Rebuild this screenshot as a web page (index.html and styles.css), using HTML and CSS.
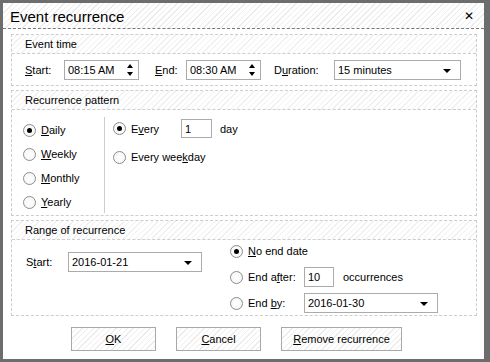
FILE: index.html
```html
<!DOCTYPE html>
<html>
<head>
    <link rel="stylesheet" href="styles.css">
</head>
<body>
    <div class="dialog">
        <div class="titlebar">
            <span class="title">Event recurrence</span>
            <span class="close">&#x2715;</span>
        </div>

        <div class="group group-time">
            <div class="group-header">Event time</div>
            <div class="time-row">
                <span class="lbl lbl-start"><u>S</u>tart:</span>
                <div class="field spin spin-start">08:15 AM<span class="spinner"><i class="up"></i><i class="down"></i></span></div>
                <span class="lbl lbl-end"><u>E</u>nd:</span>
                <div class="field spin spin-end">08:30 AM<span class="spinner"><i class="up"></i><i class="down"></i></span></div>
                <span class="lbl lbl-dur">D<u>u</u>ration:</span>
                <div class="field combo combo-dur">15 minutes<i class="arrow"></i></div>
            </div>
        </div>

        <div class="group group-pattern">
            <div class="group-header">Recurrence pattern</div>
            <div class="pattern-body">
                <div class="freq-list">
                    <label class="radio"><span class="dot checked"></span><span><u>D</u>aily</span></label>
                    <label class="radio"><span class="dot"></span><span><u>W</u>eekly</span></label>
                    <label class="radio"><span class="dot"></span><span><u>M</u>onthly</span></label>
                    <label class="radio"><span class="dot"></span><span><u>Y</u>early</span></label>
                </div>
                <div class="freq-detail">
                    <div class="every-row">
                        <label class="radio"><span class="dot checked"></span><span>E<u>v</u>ery</span></label>
                        <div class="field num num-days">1</div>
                        <span>day</span>
                    </div>
                    <label class="radio weekday"><span class="dot"></span><span>Every wee<u>k</u>day</span></label>
                </div>
            </div>
        </div>

        <div class="group group-range">
            <div class="group-header">Range of recurrence</div>
            <div class="range-body">
                <div class="range-start">
                    <span class="lbl">S<u>t</u>art:</span>
                    <div class="field combo combo-start">2016-01-21<i class="arrow"></i></div>
                </div>
                <div class="range-end">
                    <div class="end-row">
                        <label class="radio"><span class="dot checked"></span><span><u>N</u>o end date</span></label>
                    </div>
                    <div class="end-row">
                        <label class="radio end-lbl"><span class="dot"></span><span>End a<u>f</u>ter:</span></label>
                        <div class="field num num-occ">10</div>
                        <span class="occ">occurrences</span>
                    </div>
                    <div class="end-row">
                        <label class="radio end-lbl"><span class="dot"></span><span>End <u>b</u>y:</span></label>
                        <div class="field combo combo-end">2016-01-30<i class="arrow"></i></div>
                    </div>
                </div>
            </div>
        </div>

        <div class="buttons">
            <button class="btn btn-ok"><u>O</u>K</button>
            <button class="btn btn-cancel"><u>C</u>ancel</button>
            <button class="btn btn-remove"><u>R</u>emove recurrence</button>
        </div>
    </div>
</body>
</html>
```

FILE: styles.css
```css
* {
    box-sizing: border-box;
    margin: 0;
    padding: 0;
}

body {
    background-color: #6d6d6d;
    font-family: 'Liberation Sans', Arial, sans-serif;
    font-size: 11px;
    color: #000;
    width: 490px;
    height: 362px;
    overflow: hidden;
    padding: 3px 6px 3px 3px;
}

.dialog {
    width: 481px;
    height: 356px;
    background: #fff;
}

.titlebar {
    height: 26px;
    display: flex;
    align-items: center;
    justify-content: space-between;
    padding: 0 10px 0 7px;
    border-bottom: 1px dashed #7a7a7a;
    background: repeating-linear-gradient(135deg, #fff 0, #fff 3px, #ececec 3px, #ececec 4px);
}

.title {
    font-size: 15px;
    padding-top: 1px;
}

.close {
    font-size: 12px;
    font-weight: bold;
    font-family: 'DejaVu Sans', sans-serif;
}

.group {
    margin: 4px 0 0 8px;
    width: 466px;
    border: 1px dashed #cdcdcd;
}

.group-time {
    margin-top: 5px;
    height: 52px;
}

.group-pattern {
    height: 126px;
}

.group-range {
    height: 96px;
}

.group-header {
    height: 19px;
    line-height: 18px;
    padding-left: 13px;
    border-bottom: 1px dashed #cdcdcd;
    background: repeating-linear-gradient(135deg, #fff 0, #fff 3px, #f0f0f0 3px, #f0f0f0 4px);
}

.field {
    height: 20px;
    border: 1px solid #ababab;
    background: #fff;
    padding-left: 3px;
    line-height: 18px;
    position: relative;
}

.time-row {
    display: flex;
    align-items: center;
    padding: 6px 0 0 13px;
}

.lbl-start {
    width: 39px;
}

.spin {
    width: 75px;
}

.lbl-end {
    margin-left: 16px;
    width: 31px;
}

.lbl-dur {
    margin-left: 13px;
    width: 60px;
}

.combo-dur {
    width: 127px;
}

.spinner {
    position: absolute;
    right: 4px;
    top: 3px;
    width: 7px;
    height: 12px;
}

.spinner i {
    position: absolute;
    left: 0;
    width: 0;
    height: 0;
    border-left: 3.5px solid transparent;
    border-right: 3.5px solid transparent;
}

.spinner .up {
    top: 0;
    border-bottom: 4px solid #000;
}

.spinner .down {
    bottom: 0;
    border-top: 4px solid #000;
}

.arrow {
    position: absolute;
    right: 9px;
    top: 8px;
    width: 0;
    height: 0;
    border-left: 4px solid transparent;
    border-right: 4px solid transparent;
    border-top: 4px solid #000;
}

.radio {
    display: flex;
    align-items: center;
    height: 18px;
}

.dot {
    width: 13px;
    height: 13px;
    border: 1px solid #8c8c8c;
    border-radius: 50%;
    background: radial-gradient(circle at 50% 50%, #fff 0, #f3f3f3 100%);
    margin-right: 5px;
    position: relative;
    flex: none;
}

.dot.checked::after {
    content: '';
    position: absolute;
    left: 3px;
    top: 3px;
    width: 5px;
    height: 5px;
    border-radius: 50%;
    background: #000;
}

.pattern-body {
    display: flex;
    padding-left: 11px;
}

.freq-list {
    width: 81px;
    display: flex;
    flex-direction: column;
    gap: 6px;
    padding-top: 11px;
}

.freq-detail {
    border-left: 1px solid #cdcdcd;
    margin-top: 7px;
    padding: 2px 0 0 8px;
    height: 96px;
    flex: 1;
}

.every-row {
    display: flex;
    align-items: center;
    height: 19px;
}

.every-row .radio {
    width: 68px;
}

.num-days {
    width: 31px;
    height: 19px;
    margin-right: 8px;
}

.weekday {
    margin-top: 10px;
}

.range-body {
    display: flex;
    padding: 1px 0 0 14px;
}

.range-start {
    display: flex;
    align-items: center;
    height: 20px;
    margin-top: 11px;
    width: 204px;
}

.range-start .lbl {
    width: 42px;
}

.combo-start {
    width: 134px;
}

.range-end {
    display: flex;
    flex-direction: column;
    gap: 6px;
}

.end-row {
    display: flex;
    align-items: center;
    height: 20px;
}

.end-lbl {
    width: 74px;
}

.num-occ {
    width: 30px;
    margin-right: 9px;
}

.combo-end {
    width: 134px;
}

.buttons {
    display: flex;
    gap: 20px;
    padding: 11px 0 0 68px;
}

.btn {
    height: 24px;
    border: 1px solid #a8a8a8;
    font-family: 'Liberation Sans', Arial, sans-serif;
    font-size: 11px;
    color: #000;
    background: repeating-linear-gradient(135deg, #fff 0, #fff 3px, #ececec 3px, #ececec 4px);
}

.btn-ok,
.btn-cancel {
    width: 85px;
}

.btn-remove {
    width: 121px;
}
```
